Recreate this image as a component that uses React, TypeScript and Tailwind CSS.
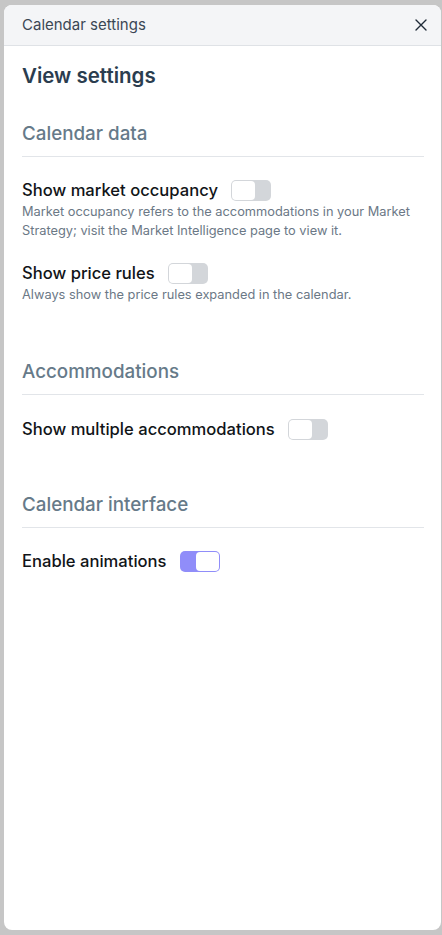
import React from "react";

function Toggle({ on }: { on?: boolean }) {
  return (
    <div
      className={
        "w-[40px] h-[21px] rounded-[5px] p-[1px] flex shrink-0 " +
        (on ? "bg-[#908df9] justify-end" : "bg-[#d3d6da] justify-start")
      }
    >
      <div className="w-[23px] h-[19px] bg-white rounded-[4px]" />
    </div>
  );
}

function SectionHeading({ children, className = "" }: { children: React.ReactNode; className?: string }) {
  return (
    <div className={"border-b border-[#e2e5e9] pb-[8px] " + className}>
      <h3 className="text-[18.8px] leading-[28px] font-medium text-[#667a89]">{children}</h3>
    </div>
  );
}

function Row({ label, desc, className = "" }: { label: string; desc?: string; className?: string }) {
  return (
    <div className={className}>
      <div className="flex items-center gap-[13px]">
        <span className="text-[16.6px] leading-[24px] font-medium text-[#111418]">{label}</span>
        <Toggle />
      </div>
      {desc && <p className="text-[12.8px] leading-[19px] text-[#6b7886] pr-[6px]">{desc}</p>}
    </div>
  );
}

export default function App() {
  return (
    <div
      className="w-[442px] h-[935px] bg-[#c6c6c6] pt-[5px] pl-[4px] pr-[1px] pb-[5px]"
      style={{ fontFamily: "Inter, 'Noto Sans', sans-serif" }}
    >
      <div className="w-full h-full bg-white rounded-[8px] overflow-hidden flex flex-col">
        <div className="h-[41px] bg-[#f4f5f7] border-b border-[#dfe2e6] flex items-center justify-between pl-[18px] pr-[14px] shrink-0">
          <span className="text-[15px] text-[#3b4754]">Calendar settings</span>
          <svg width="12" height="12" viewBox="0 0 12 12" fill="none" stroke="#1f2a37" strokeWidth="1.4" strokeLinecap="round">
            <path d="M1 1L11 11M11 1L1 11" />
          </svg>
        </div>
        <div className="pl-[18px] pr-[17px] pt-[16px]">
          <h2 className="text-[20.5px] leading-[28px] font-semibold text-[#2b3d4f]">View settings</h2>

          <SectionHeading className="mt-[30px]">Calendar data</SectionHeading>
          <Row
            className="mt-[21px]"
            label="Show market occupancy"
            desc="Market occupancy refers to the accommodations in your Market Strategy; visit the Market Intelligence page to view it."
          />
          <Row className="mt-[21px]" label="Show price rules" desc="Always show the price rules expanded in the calendar." />

          <SectionHeading className="mt-[54px]">Accommodations</SectionHeading>
          <Row className="mt-[22px]" label="Show multiple accommodations" />

          <SectionHeading className="mt-[50px]">Calendar interface</SectionHeading>
          <div className="mt-[21px] flex items-center gap-[13px]">
            <span className="text-[16.6px] leading-[24px] font-medium text-[#111418]">Enable animations</span>
            <Toggle on />
          </div>
        </div>
      </div>
    </div>
  );
}
